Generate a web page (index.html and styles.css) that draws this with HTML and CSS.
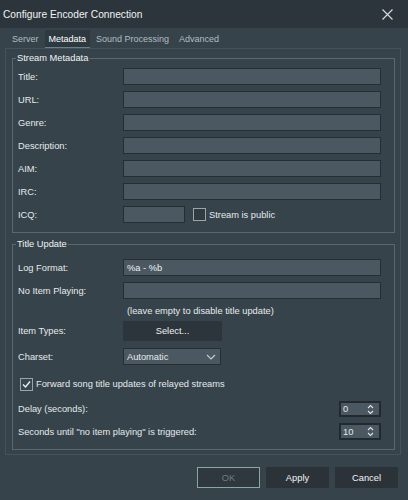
FILE: index.html
```html
<!DOCTYPE html>
<html lang="en">
<head>
  <meta charset="UTF-8">
  <title>Configure Encoder Connection</title>
  <link rel="stylesheet" href="styles.css">
</head>
<body>
  <div class="dialog">
    <div class="titlebar">
      <span class="title">Configure Encoder Connection</span>
      <svg class="close" width="11" height="11" viewBox="0 0 11 11">
        <path d="M0.5 0.5 L10.5 10.5 M10.5 0.5 L0.5 10.5" stroke="#d6dadc" stroke-width="1.2" fill="none"/>
      </svg>
    </div>

    <div class="tabs">
      <span class="tab">Server</span>
      <span class="tab selected">Metadata</span>
      <span class="tab">Sound Processing</span>
      <span class="tab">Advanced</span>
    </div>

    <div class="pane">
      <fieldset class="group meta">
        <legend>Stream Metadata</legend>
        <div class="row"><label>Title:</label><input type="text"></div>
        <div class="row"><label>URL:</label><input type="text"></div>
        <div class="row"><label>Genre:</label><input type="text"></div>
        <div class="row"><label>Description:</label><input type="text"></div>
        <div class="row"><label>AIM:</label><input type="text"></div>
        <div class="row"><label>IRC:</label><input type="text"></div>
        <div class="row">
          <label>ICQ:</label>
          <input type="text" class="short">
          <span class="check"></span>
          <span class="check-text">Stream is public</span>
        </div>
      </fieldset>

      <fieldset class="group update">
        <legend>Title Update</legend>
        <div class="row"><label>Log Format:</label><input type="text" value="%a - %b"></div>
        <div class="row gap-noitem"><label>No Item Playing:</label><input type="text"></div>
        <div class="hint">(leave empty to disable title update)</div>
        <div class="row tall"><label>Item Types:</label><button class="select-btn">Select...</button></div>
        <div class="row gap-charset">
          <label>Charset:</label>
          <div class="combo">
            <span>Automatic</span>
            <svg width="10" height="6" viewBox="0 0 10 6"><path d="M1 1 L5 5 L9 1" stroke="#c8ced2" stroke-width="1.1" fill="none"/></svg>
          </div>
        </div>
        <div class="check-row">
          <span class="check on">
            <svg width="11" height="11" viewBox="0 0 11 11"><path d="M2 5.5 L4.5 8 L9 2.5" stroke="#eef1f2" stroke-width="1.4" fill="none"/></svg>
          </span>
          <span class="check-text">Forward song title updates of relayed streams</span>
        </div>
        <div class="row spin-row">
          <label class="wide">Delay (seconds):</label>
          <div class="spin"><span>0</span><svg width="7" height="11" viewBox="0 0 7 11"><path d="M1 4 L3.5 1.5 L6 4 M1 7 L3.5 9.5 L6 7" stroke="#dfe3e5" stroke-width="1.1" fill="none"/></svg></div>
        </div>
        <div class="row spin-row second">
          <label class="wide">Seconds until "no item playing" is triggered:</label>
          <div class="spin"><span>10</span><svg width="7" height="11" viewBox="0 0 7 11"><path d="M1 4 L3.5 1.5 L6 4 M1 7 L3.5 9.5 L6 7" stroke="#dfe3e5" stroke-width="1.1" fill="none"/></svg></div>
        </div>
      </fieldset>
    </div>

    <div class="buttons">
      <button class="btn disabled">OK</button>
      <button class="btn">Apply</button>
      <button class="btn">Cancel</button>
    </div>
  </div>
</body>
</html>
```

FILE: styles.css
```css
body {
  margin: 0;
  background-color: #36434b;
  font-family: 'Liberation Sans', Arial, sans-serif;
  font-size: 9.3px;
  color: #e6eaec;
}

.dialog {
  width: 408px;
  height: 500px;
  display: flex;
  flex-direction: column;
}

.titlebar {
  height: 28px;
  background-color: #2c353c;
  display: flex;
  align-items: center;
  justify-content: space-between;
  padding: 0 15px 0 3px;
}

.title {
  font-size: 10.2px;
  color: #f0f2f3;
}

.tabs {
  height: 20px;
  display: flex;
  align-items: flex-end;
  padding-left: 8px;
  font-size: 9px;
}

.tab {
  height: 18px;
  line-height: 18px;
  padding: 0 4px;
  margin-right: 2px;
  color: #b4bdc2;
}

.tab.selected {
  background-color: #2e393f;
  color: #ffffff;
  height: 17px;
  border-bottom: 1px solid #6b7f88;
}

.pane {
  margin: 0 7px 0 5px;
  border: 1px solid #465259;
  padding: 0 0 4px;
}

.group {
  margin: 3px 5px 0 6px;
  border: 1px solid #5b676e;
  padding: 3px 13px 9px 5px;
  min-width: 0;
}

.group.update {
  margin-top: 5px;
  padding-top: 8px;
}

legend {
  padding: 0 1px;
  margin-left: -2px;
  line-height: 13px;
  color: #f2f4f5;
}

.row {
  display: flex;
  align-items: center;
  height: 17px;
  margin-bottom: 6px;
}

.meta .row:last-child {
  margin-bottom: 0;
}

label {
  width: 105px;
  flex: none;
}

label.wide {
  flex: 1;
}

input {
  flex: 1;
  height: 17px;
  box-sizing: border-box;
  background-color: #4b5862;
  border: 1px solid #262e34;
  padding: 0 3px;
  font-family: inherit;
  font-size: 9.3px;
  color: #eef1f2;
  outline: none;
}

input.short {
  flex: none;
  width: 62px;
}

.check {
  width: 13px;
  height: 13px;
  box-sizing: border-box;
  border: 1px solid #9aa5ab;
  background-color: #303a40;
  margin-left: 8px;
  display: flex;
  align-items: center;
  justify-content: center;
}

.check-text {
  margin-left: 3px;
}

.gap-noitem {
  margin-bottom: 4px;
}

.hint {
  height: 16px;
  line-height: 16px;
  padding-left: 109px;
  margin-bottom: 2px;
}

.row.tall {
  height: 20px;
  margin-bottom: 7px;
}

.select-btn {
  width: 99px;
  height: 20px;
  background-color: #2c353b;
  border: none;
  color: #f0f2f3;
  font-family: inherit;
  font-size: 9.3px;
}

.combo {
  width: 98px;
  height: 17px;
  box-sizing: border-box;
  background-color: #4b5862;
  border: 1px solid #262e34;
  display: flex;
  align-items: center;
  justify-content: space-between;
  padding: 0 4px 0 3px;
}

.gap-charset {
  margin-bottom: 12px;
}

.check-row {
  display: flex;
  align-items: center;
  height: 14px;
  margin-bottom: 10px;
}

.check-row .check {
  margin-left: 2px;
  background-color: #3a464e;
}

.spin-row {
  height: 16px;
  margin-bottom: 6px;
}

.spin-row.second {
  height: 17px;
  margin-bottom: 0;
}

.spin {
  width: 42px;
  height: 100%;
  box-sizing: border-box;
  background-color: #4b5862;
  border: 2px solid #222a2f;
  display: flex;
  align-items: center;
  justify-content: space-between;
  padding: 0 5px 0 2px;
}

.buttons {
  display: flex;
  justify-content: flex-end;
  gap: 6px;
  margin-top: 12px;
  padding-right: 10px;
}

.btn {
  width: 63px;
  height: 21px;
  background-color: #2b3339;
  border: 1px solid #2b3339;
  color: #f2f4f5;
  font-family: inherit;
  font-size: 9.3px;
}

.btn.disabled {
  color: #6f7e82;
  border-color: #88a8a6;
  background-color: #2e383e;
}
```
